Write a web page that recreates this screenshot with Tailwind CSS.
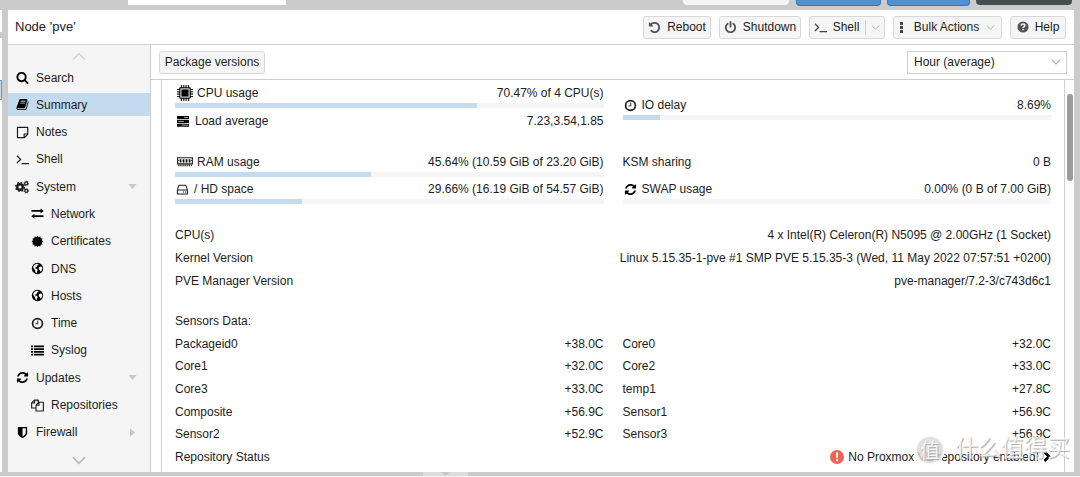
<!DOCTYPE html>
<html lang="en">
<head>
<meta charset="utf-8">
<meta name="viewport" content="width=device-width, initial-scale=1">
<title>Node 'pve' - Summary</title>
<script src="https://cdn.jsdelivr.net/npm/@tailwindcss/browser@4"></script>
</head>
<body class="min-h-screen flex flex-col overflow-hidden bg-[#cbcbcb] font-['Liberation_Sans',Arial,sans-serif] text-[12px] leading-5 text-[#1c1c1c]">

<svg class="hidden" aria-hidden="true">
  <symbol id="search" viewBox="0 0 1792 1792"><path d="M1216 832q0-185-131.5-316.5t-316.5-131.5-316.5 131.5-131.5 316.5 131.5 316.5 316.5 131.5 316.5-131.5 131.5-316.5zm512 832q0 52-38 90t-90 38q-54 0-90-38l-343-342q-179 124-399 124-143 0-273.5-55.5t-225-150-150-225-55.5-273.5 55.5-273.5 150-225 225-150 273.5-55.5 273.5 55.5 225 150 150 225 55.5 273.5q0 220-124 399l343 343q37 37 37 90z"/></symbol>
  <symbol id="book" viewBox="0 0 1792 1792"><path d="M1703 478q40 57 18 129l-275 906q-19 64-76.5 107.5t-122.5 43.5h-923q-77 0-148.5-53.5t-99.5-131.5q-24-67-2-127 0-4 3-27t4-37q1-8-3-21.5t-3-19.5q2-11 8-21t16.5-23.5 16.5-23.5q23-38 45-91.5t30-91.5q3-10 .5-30t-.5-28q3-11 17-28t17-23q21-36 42-92t25-90q1-9-2.5-32t.5-28q4-13 22-30.5t22-22.5q19-26 42.5-84.5t27.5-96.5q1-8-3-25.5t-2-26.5q2-8 9-18t18-23 17-21q8-12 16.5-30.5t15-35 16-36 19.5-32 26.5-23.5 36-11.5 47.5 5.5l-1 3q38-9 51-9h761q74 0 114 56t18 130l-274 906q-36 119-71.5 153.5t-128.5 34.5h-869q-27 0-38 15-11 16-1 43 24 70 144 70h923q29 0 56-15.5t35-41.5l300-987q7-22 5-57 38 15 59 43zm-1064 2q-4 13 2 22.5t20 9.5h608q13 0 25.5-9.5t16.5-22.5l21-64q4-13-2-22.5t-20-9.5h-608q-13 0-25.5 9.5t-16.5 22.5zm-83 256q-4 13 2 22.5t20 9.5h608q13 0 25.5-9.5t16.5-22.5l21-64q4-13-2-22.5t-20-9.5h-608q-13 0-25.5 9.5t-16.5 22.5z"/></symbol>
  <symbol id="refresh" viewBox="0 0 1792 1792"><path d="M1639 1056q0 5-1 7-64 268-268 434.5t-478 166.5q-146 0-282.5-55t-243.5-157l-129 129q-19 19-45 19t-45-19-19-45v-448q0-26 19-45t45-19h448q26 0 45 19t19 45-19 45l-137 137q71 66 161 102t187 36q134 0 250-65t186-179q11-17 53-117 8-23 30-23h192q13 0 22.5 9.5t9.5 22.5zm25-800v448q0 26-19 45t-45 19h-448q-26 0-45-19t-19-45 19-45l138-138q-148-137-349-137-134 0-250 65t-186 179q-11 17-53 117-8 23-30 23h-199q-13 0-22.5-9.5t-9.5-22.5v-7q65-268 270-434.5t480-166.5q146 0 284 55.5t245 156.5l130-129q19-19 45-19t45 19 19 45z"/></symbol>
  <symbol id="shield" viewBox="0 0 1792 1792"><path d="M1344 960v-640h-448v1137q119-63 213-137 235-184 235-360zm192-768v768q0 86-33.5 170.5t-83 150-118 127.5-126.5 103-121 77.5-89.5 49.5-42.5 20q-12 6-26 6t-26-6q-16-7-42.5-20t-89.5-49.5-121-77.5-126.5-103-118-127.5-83-150-33.5-170.5v-768q0-26 19-45t45-19h1152q26 0 45 19t19 45z"/></symbol>
  <symbol id="undo" viewBox="0 0 1792 1792"><path d="M1664 896q0 156-61 298t-164 245-245 164-298 61q-172 0-327-72.5t-264-204.5q-7-10-6.5-22.5t8.5-20.5l137-138q10-9 25-9 16 2 23 12 73 95 179 147t225 52q104 0 198.5-40.5t163.5-109.5 109.5-163.5 40.5-198.5-40.5-198.5-109.5-163.5-163.5-109.5-198.5-40.5q-98 0-188 35.5t-160 101.5l137 138q31 30 14 69-17 40-59 40h-448q-26 0-45-19t-19-45v-448q0-42 40-59 39-17 69 14l130 129q107-101 244.5-156.5t284.5-55.5q156 0 298 61t245 164 164 245 61 298z"/></symbol>
  <symbol id="power" viewBox="0 0 1792 1792"><path d="M1664 896q0 156-61 298t-164 245-245 164-298 61-298-61-245-164-164-245-61-298q0-182 80.5-343t226.5-270q43-32 95.5-25t83.5 50q32 42 24.5 94.5t-49.5 84.5q-98 74-151.5 181t-53.5 228q0 104 40.5 198.5t109.5 163.5 163.5 109.5 198.5 40.5 198.5-40.5 163.5-109.5 109.5-163.5 40.5-198.5q0-121-53.5-228t-151.5-181q-42-32-49.5-84.5t24.5-94.5q31-43 84-50t95 25q146 109 226.5 270t80.5 343zm-640-768v640q0 52-38 90t-90 38-90-38-38-90v-640q0-52 38-90t90-38 90 38 38 90z"/></symbol>
  <symbol id="note" viewBox="0 0 14 14"><path d="M1.600 1.500h11v7.500l-3.500 3.500H1.600zM12.600 8.600H8.800v3.900" fill="none" stroke="currentColor" stroke-width="1.300" stroke-linejoin="round"/></symbol>
  <symbol id="terminal" viewBox="0 0 14 14"><path d="M1 3l3.900 3.900L1 10.800M6 11.400h8" fill="none" stroke="currentColor" stroke-width="1.400"/></symbol>
  <symbol id="gears" viewBox="0 0 14 14"><g fill="none" stroke="currentColor"><circle cx="5" cy="7" r="2.800" stroke-width="2.400"/><circle cx="5" cy="7" r="4.400" stroke-width="1.300" stroke-dasharray="1.730 1.730"/><circle cx="11.300" cy="3.400" r="1.500" stroke-width="1.300"/><circle cx="11.300" cy="3.400" r="2.300" stroke-width=".8" stroke-dasharray=".9 .9"/><circle cx="11.300" cy="10.800" r="1.500" stroke-width="1.300"/><circle cx="11.300" cy="10.800" r="2.300" stroke-width=".8" stroke-dasharray=".9 .9"/></g></symbol>
  <symbol id="exchange" viewBox="0 0 14 14"><path d="M.5 3.300h9.800V1.500L13.700 4.200 10.300 7V5H.5zM13.500 9H3.700V7.200L.3 9.900l3.400 2.800v-1.900h9.800z"/></symbol>
  <symbol id="cert" viewBox="0 0 14 14"><path d="M7 .8l1.300 1.500L10 1.400l.5 2 2 .4-.7 1.900L13.300 7l-1.500 1.300.7 1.900-2 .4-.5 2-1.700-.9L7 13.200l-1.300-1.500-1.700.9-.5-2-2-.4.7-1.900L.7 7l1.500-1.300-.7-1.900 2-.4.5-2 1.700.9z"/></symbol>
  <symbol id="globe" viewBox="0 0 14 14"><circle cx="7" cy="7" r="6.100"/><path d="M6 1.800l2.200.3-.4 1.100-1.400.7 0 1-1.200.8-1 1.100 1.800.5 1.300 1.400-.8 1.400-.8 2.200-1-1.500-.3-2L2.900 7 2.300 5.400 3.500 3.200zM9.700 4.800l2 .3.600 2-.9 2.300-1.200 1.200-.7-2-1.300-.9.400-1.900z" fill="#f5f5f5"/></symbol>
  <symbol id="clock" viewBox="0 0 14 14"><circle cx="7" cy="7" r="5.300" fill="none" stroke="currentColor" stroke-width="1.800"/><path d="M7.300 3.900v3.500H4.800" fill="none" stroke="currentColor" stroke-width="1"/></symbol>
  <symbol id="list" viewBox="0 0 14 14"><path d="M0 1.500h2.200v2H0zM3.200 1.500H14v2H3.200zM0 4.500h2.200v2H0zM3.200 4.500H14v2H3.200zM0 7.500h2.200v2H0zM3.200 7.500H14v2H3.200zM0 10.500h2.200v2H0zM3.200 10.500H14v2H3.200z"/></symbol>
  <symbol id="files" viewBox="0 0 14 14"><path d="M5.300 9.700H.7V4.100l2.900-2.900h4.100v2.200M3.900 1.200v3.100H.7M5.400 12.900V6.500l3-3h4.900v9.400zM8.600 3.500v3.200H5.400M8 3.500V1.200" fill="none" stroke="currentColor" stroke-width="1.200" stroke-linejoin="round"/></symbol>
  <symbol id="cpu" viewBox="0 0 16 16"><path d="M4.500 0v16M6.800 0v16M9.100 0v16M11.500 0v16M0 4.500h16M0 6.800h16M0 9.100h16M0 11.500h16" stroke="currentColor" stroke-width="1.200"/><rect x="2.300" y="2.300" width="11.400" height="11.400" rx="1"/><rect x="3.900" y="3.900" width="8.200" height="8.200" fill="none" stroke="#fff" stroke-width="1"/></symbol>
  <symbol id="server" viewBox="0 0 14 12"><path d="M.5 0h13v3.300H.5zM.5 4.200h13v3.300H.5zM.5 8.400h13v3.300H.5z"/><path d="M8 1.700h4.500M2 5.900h6M5.500 10h7" stroke="#ccc" stroke-width=".9"/></symbol>
  <symbol id="ram" viewBox="0 0 16 10"><path d="M.6.700h14.800v2.200l-.7.500.7.500v3H.6v-3l.7-.5-.7-.5z" fill="none" stroke="currentColor" stroke-width="1.100"/><path d="M2.700 2.200h1.700v3.200H2.700zM5.700 2.200h1.700v3.200H5.700zM8.700 2.200h1.700v3.200H8.700zM11.700 2.200h1.700v3.200h-1.700z"/><path d="M1.200 8.400h13.600" stroke="currentColor" stroke-width="1.800" stroke-dasharray="1.300 .8"/></symbol>
  <symbol id="hdd" viewBox="0 0 14 14"><path d="M1.500 7.500h10.800v4.300H1.500zM1.500 7.500l1.700-5.200h7.400l1.700 5.200" fill="none" stroke="currentColor" stroke-width="1.100" stroke-linejoin="round"/><path d="M7.500 9.200h1.200v1.100H7.500zM9.700 9.200h1.200v1.100H9.700z"/></symbol>
  <symbol id="help" viewBox="0 0 14 14"><circle cx="7" cy="7" r="6.500"/><path d="M4.800 5.300c.2-1.300 1-1.900 2.200-1.900s2.200.7 2.200 1.800c0 1.500-2.100 1.400-2.100 3" fill="none" stroke="#f5f5f5" stroke-width="1.700"/><path d="M6.200 9.200h1.800v1.700H6.200z" fill="#f5f5f5"/></symbol>
  <symbol id="down" viewBox="0 0 10 6"><path d="M.7.700L5 5 9.300.7" fill="none" stroke="currentColor" stroke-width="1.100"/></symbol>
</svg>

<div class="flex h-[10px] shrink-0 items-start pr-2" aria-hidden="true">
  <div class="ml-[128px] h-[5px] w-[158px] bg-white"></div>
  <div class="ml-auto h-[5px] w-[106px] rounded-b-sm bg-[#f5f5f5]"></div>
  <div class="ml-[7px] h-[6px] w-[85px] rounded-b-sm border border-t-0 border-[#3577bd] bg-[#4f90d3]"></div>
  <div class="ml-[6px] h-[6px] w-[83px] rounded-b-sm border border-t-0 border-[#3577bd] bg-[#4f90d3]"></div>
  <div class="ml-[6px] h-[5px] w-[96px] rounded-b-sm bg-[#464d4d]"></div>
</div>

<div class="flex grow">
  <div class="flex w-[2px] shrink-0 flex-col gap-[6px]" aria-hidden="true">
    <div class="h-[22px] bg-white"></div>
    <div class="grow bg-white pt-[42px]"><div class="h-5 border border-l-0 border-[#5b9bd5] bg-[#c4daee]"></div></div>
  </div>

  <main class="ml-[6px] mr-[6px] flex min-w-0 grow flex-col bg-white">
    <header class="flex h-[35px] items-center border-b border-[#cfcfcf] pl-[7px] pr-2">
      <h1 class="grow text-[13px]">Node 'pve'</h1>
      <div class="flex gap-2">
        <button class="flex h-[23px] w-[68px] items-center justify-center gap-[6px] rounded-[3px] border border-[#d8d8d8] bg-[#f5f5f5]"><svg class="size-[13px] fill-[#555]"><use href="#undo"/></svg>Reboot</button>
        <button class="flex h-[23px] w-[82px] items-center justify-center gap-[6px] rounded-[3px] border border-[#d8d8d8] bg-[#f5f5f5]"><svg class="size-[13px] fill-[#555]"><use href="#power"/></svg>Shutdown</button>
        <button class="flex h-[23px] w-[76px] items-center justify-center rounded-[3px] border border-[#d8d8d8] bg-[#f5f5f5]"><svg class="mr-[6px] size-[13px] text-[#444]"><use href="#terminal"/></svg>Shell<span class="ml-[6px] mr-[5px] h-[15px] w-px bg-[#d0d0d0]"></span><svg class="h-[5px] w-[9px] text-[#aaa]"><use href="#down"/></svg></button>
        <button class="flex h-[23px] w-[109px] items-center justify-center rounded-[3px] border border-[#d8d8d8] bg-[#f5f5f5]"><svg class="mr-[11px] h-[11px] w-[3px] fill-[#444]" viewBox="0 0 3 11"><path d="M0 0h3v3H0zM0 4h3v3H0zM0 8h3v3H0z"/></svg>Bulk Actions<svg class="ml-[7px] h-[5px] w-[9px] text-[#aaa]"><use href="#down"/></svg></button>
        <button class="flex h-[23px] w-[56px] items-center justify-center gap-[6px] rounded-[3px] border border-[#d8d8d8] bg-[#f5f5f5]"><svg class="size-3 fill-[#555]"><use href="#help"/></svg>Help</button>
      </div>
    </header>

    <div class="flex grow">
      <nav class="flex w-[143px] shrink-0 flex-col border-r border-[#cfcfcf] bg-[#f5f5f5] pb-1">
        <svg class="mx-auto mt-[7px] h-[9px] w-[14px] shrink-0 rotate-180 text-[#d4d4d4]"><use href="#down"/></svg>
        <ul class="mt-[5px] flex grow flex-col justify-between *:h-[23px]">
          <li><a href="#" class="flex h-full items-center gap-[7px] pl-2"><svg class="size-[13px]"><use href="#search"/></svg>Search</a></li>
          <li><a href="#" class="flex h-full items-center gap-[7px] bg-[#c4daee] pl-2"><svg class="size-[13px]"><use href="#book"/></svg>Summary</a></li>
          <li><a href="#" class="flex h-full items-center gap-[7px] pl-2"><svg class="size-[13px]"><use href="#note"/></svg>Notes</a></li>
          <li><a href="#" class="flex h-full items-center gap-[7px] pl-2"><svg class="size-[13px]"><use href="#terminal"/></svg>Shell</a></li>
          <li><a href="#" class="flex h-full items-center gap-[7px] pl-[7px] pr-[13px]"><svg class="size-[14px]"><use href="#gears"/></svg><span class="grow">System</span><svg class="h-[5px] w-[9px] fill-[#c8c8c8]" viewBox="0 0 10 6"><path d="M0 0h10L5 6z"/></svg></a></li>
          <li><a href="#" class="flex h-full items-center gap-[7px] pl-[23px]"><svg class="size-[13px]"><use href="#exchange"/></svg>Network</a></li>
          <li><a href="#" class="flex h-full items-center gap-[7px] pl-[23px]"><svg class="size-[13px]"><use href="#cert"/></svg>Certificates</a></li>
          <li><a href="#" class="flex h-full items-center gap-[7px] pl-[23px]"><svg class="size-[13px]"><use href="#globe"/></svg>DNS</a></li>
          <li><a href="#" class="flex h-full items-center gap-[7px] pl-[23px]"><svg class="size-[13px]"><use href="#globe"/></svg>Hosts</a></li>
          <li><a href="#" class="flex h-full items-center gap-[7px] pl-[23px]"><svg class="size-[13px]"><use href="#clock"/></svg>Time</a></li>
          <li><a href="#" class="flex h-full items-center gap-[7px] pl-[23px]"><svg class="size-[13px]"><use href="#list"/></svg>Syslog</a></li>
          <li><a href="#" class="flex h-full items-center gap-[7px] pl-2 pr-[13px]"><svg class="size-[13px]"><use href="#refresh"/></svg><span class="grow">Updates</span><svg class="h-[5px] w-[9px] fill-[#c8c8c8]" viewBox="0 0 10 6"><path d="M0 0h10L5 6z"/></svg></a></li>
          <li><a href="#" class="flex h-full items-center gap-[7px] pl-[23px]"><svg class="size-[13px]"><use href="#files"/></svg>Repositories</a></li>
          <li><a href="#" class="flex h-full items-center gap-[7px] pl-2 pr-[15px]"><svg class="size-[13px]"><use href="#shield"/></svg><span class="grow">Firewall</span><svg class="h-[9px] w-[5px] fill-[#c8c8c8]" viewBox="0 0 6 10"><path d="M0 0v10l6-5z"/></svg></a></li>
        </ul>
        <svg class="mx-auto mb-[3px] mt-3 h-[9px] w-[14px] shrink-0 text-[#b8b8b8]"><use href="#down"/></svg>
      </nav>

      <section class="flex min-w-0 grow flex-col">
        <div class="flex h-[35px] items-center justify-between border-b border-[#cfcfcf] pl-2 pr-[7px]">
          <button class="h-[23px] w-[106px] rounded-[3px] border border-[#d8d8d8] bg-[#f5f5f5]">Package versions</button>
          <div class="relative">
            <select aria-label="Time frame" class="h-[23px] w-[160px] appearance-none border border-[#cfcfcf] bg-white pl-[6px] leading-5"><option>Hour (average)</option></select>
            <svg class="pointer-events-none absolute right-[6px] top-2 h-[6px] w-[10px] text-[#aaa]"><use href="#down"/></svg>
          </div>
        </div>

        <div class="flex grow">
          <div class="relative ml-[10px] min-w-0 grow border-x border-[#cfcfcf] pl-[13px] pr-[13px] pt-[3px]">
            <div class="grid grid-cols-2 gap-x-[19px]">
              <div class="flex flex-col gap-[3px]">
                <div>
                  <div class="flex h-5 items-center gap-1 pl-[2px]"><svg class="size-4"><use href="#cpu"/></svg><span class="grow">CPU usage</span><span>70.47% of 4 CPU(s)</span></div>
                  <div class="h-[5px] bg-[#f5f5f5]"><div class="h-full bg-[#c4daee]" style="width:70.47%"></div></div>
                </div>
                <div class="flex h-5 items-center gap-[5px] pl-[1px]"><svg class="h-[11px] w-[14px]"><use href="#server"/></svg><span class="grow">Load average</span><span>7.23,3.54,1.85</span></div>
              </div>
              <div class="mt-3">
                <div class="flex h-5 items-center gap-[5px] pl-[1px]"><svg class="size-[13px]"><use href="#clock"/></svg><span class="grow">IO delay</span><span>8.69%</span></div>
                <div class="h-[5px] bg-[#f5f5f5]"><div class="h-full bg-[#c4daee]" style="width:8.69%"></div></div>
              </div>
            </div>

            <div class="mt-[21px] grid grid-cols-2 gap-x-[19px] gap-y-[2px]">
              <div>
                <div class="flex h-5 items-center gap-1 pl-[2px]"><svg class="h-[10px] w-4"><use href="#ram"/></svg><span class="grow">RAM usage</span><span>45.64% (10.59 GiB of 23.20 GiB)</span></div>
                <div class="h-[5px] bg-[#f5f5f5]"><div class="h-full bg-[#c4daee]" style="width:45.64%"></div></div>
              </div>
              <div class="flex h-5 items-center justify-between"><span>KSM sharing</span><span>0 B</span></div>
              <div>
                <div class="flex h-5 items-center gap-[5px] pl-[1px]"><svg class="size-[13px]"><use href="#hdd"/></svg><span class="grow">/ HD space</span><span>29.66% (16.19 GiB of 54.57 GiB)</span></div>
                <div class="h-[5px] bg-[#f5f5f5]"><div class="h-full bg-[#c4daee]" style="width:29.66%"></div></div>
              </div>
              <div>
                <div class="flex h-5 items-center gap-[5px] pl-[1px]"><svg class="size-[13px]"><use href="#refresh"/></svg><span class="grow">SWAP usage</span><span>0.00% (0 B of 7.00 GiB)</span></div>
                <div class="h-[5px] bg-[#f5f5f5]"></div>
              </div>
            </div>

            <dl class="mt-5 grid h-[68px] auto-rows-fr items-center *:flex *:justify-between">
              <div><dt>CPU(s)</dt><dd>4 x Intel(R) Celeron(R) N5095 @ 2.00GHz (1 Socket)</dd></div>
              <div><dt>Kernel Version</dt><dd>Linux 5.15.35-1-pve #1 SMP PVE 5.15.35-3 (Wed, 11 May 2022 07:57:51 +0200)</dd></div>
              <div><dt>PVE Manager Version</dt><dd>pve-manager/7.2-3/c743d6c1</dd></div>
            </dl>

            <dl class="mt-[18px] grid h-[158px] auto-rows-fr grid-cols-2 items-center gap-x-[19px] *:flex *:justify-between">
              <div class="col-span-2"><dt>Sensors Data:</dt></div>
              <div><dt>Packageid0</dt><dd>+38.0C</dd></div>
              <div><dt>Core0</dt><dd>+32.0C</dd></div>
              <div><dt>Core1</dt><dd>+32.0C</dd></div>
              <div><dt>Core2</dt><dd>+33.0C</dd></div>
              <div><dt>Core3</dt><dd>+33.0C</dd></div>
              <div><dt>temp1</dt><dd>+27.8C</dd></div>
              <div><dt>Composite</dt><dd>+56.9C</dd></div>
              <div><dt>Sensor1</dt><dd>+56.9C</dd></div>
              <div><dt>Sensor2</dt><dd>+52.9C</dd></div>
              <div><dt>Sensor3</dt><dd>+56.9C</dd></div>
              <div class="col-span-2"><dt>Repository Status</dt><dd class="flex items-center gap-1"><svg class="size-[14px]" viewBox="0 0 14 14"><circle cx="7" cy="7" r="7" fill="#ee6352"/><path d="M6 2.500h2.200L7.900 8.300H6.300zM6.100 9.300h2v2h-2z" fill="#fff"/></svg>No Proxmox VE repository enabled!<svg class="h-[11px] w-[8px]" viewBox="0 0 8 11"><path d="M1.500 1L6 5.500 1.500 10" fill="none" stroke="#000" stroke-width="2.600"/></svg></dd></div>
            </dl>

            <div class="pointer-events-none absolute -right-[6px] bottom-1 flex items-center gap-[10px] whitespace-nowrap font-['Noto_Sans_CJK_SC',sans-serif] text-white/80 [text-shadow:1px_1px_1px_#aaa]">
              <span class="flex size-[30px] items-center justify-center rounded-full border-2 border-white/80 bg-[#d8d8d8]/80 text-[20px]">值</span><span class="mb-2 text-[23px] leading-7">什么值得买</span>
            </div>
          </div>
          <div class="flex w-[9px] shrink-0 justify-center pt-[14px]"><div class="h-[87px] w-[6px] rounded-full bg-[#9b9b9b]"></div></div>
        </div>
      </section>
    </div>
  </main>
</div>

<div class="flex h-[5px] shrink-0 justify-center border-b border-[#f0f0f0] pr-[190px]">
  <button aria-label="Expand log panel" class="flex h-full w-[45px] items-center justify-center bg-[#dedede]"><svg class="h-[4px] w-[9px] fill-[#c0c0c0]" viewBox="0 0 10 4"><path d="M0 0h10L5 4z"/></svg></button>
</div>
</body>
</html>
